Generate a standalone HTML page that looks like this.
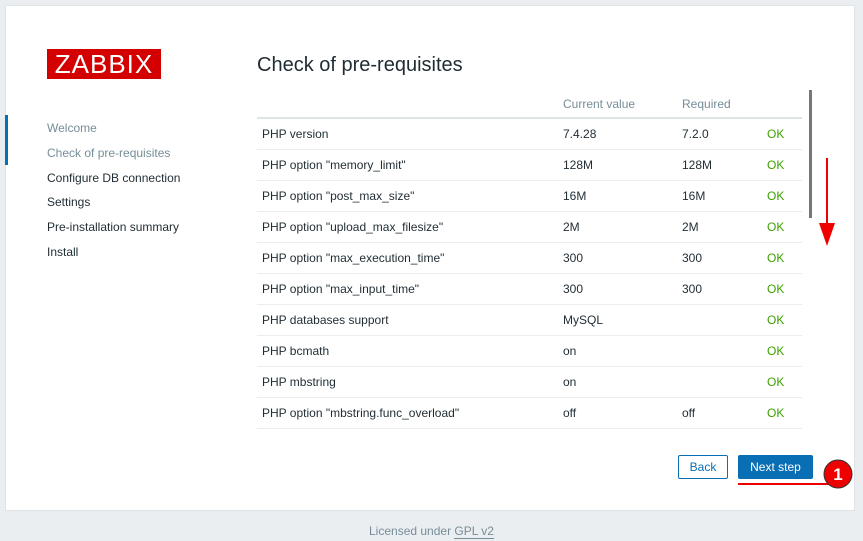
<!DOCTYPE html>
<html><head><meta charset="utf-8"><style>
body{margin:0;width:863px;height:541px;background:#ebeef1;font-family:"Liberation Sans",sans-serif;position:relative;overflow:hidden}
.card{position:absolute;left:5px;top:5px;width:850px;height:506px;background:#fff;border:1px solid #dfe4e7;box-sizing:border-box}
.logo{position:absolute;left:47px;top:49px;width:114px;height:30px;background:#d40000;color:#fff;font-size:26px;line-height:31px;text-align:center;letter-spacing:1px}
.nav{position:absolute;left:47px;font-size:12px;color:#1f2c33}
.bar{position:absolute;left:5px;top:115px;width:3px;height:50px;background:#0a6eb4}
h1{position:absolute;left:257px;top:54px;margin:0;font-weight:normal;font-size:20px;color:#1f2c33}
table{position:absolute;left:257px;top:90px;width:545px;border-collapse:collapse;font-size:12px;color:#1f2c33}
th{font-weight:normal;color:#768d99;text-align:left;height:27px;border-bottom:2px solid #dfe4e7;padding:0 5px}
td{height:30px;border-bottom:1px solid #ebeef1;padding:0 5px}
td.ok{color:#3ea000}
.btn{position:absolute;top:455px;height:24px;box-sizing:border-box;font-size:12px;line-height:24px;text-align:center;border-radius:2px}
</style></head><body>
<div class="card"></div>
<div class="bar"></div>
<div class="logo">ZABBIX</div>
<div class="nav" style="top:121px;color:#768d99">Welcome</div>
<div class="nav" style="top:146px;color:#768d99">Check of pre-requisites</div>
<div class="nav" style="top:171px">Configure DB connection</div>
<div class="nav" style="top:195px">Settings</div>
<div class="nav" style="top:220px">Pre-installation summary</div>
<div class="nav" style="top:245px">Install</div>
<h1>Check of pre-requisites</h1>
<table>
<tr><th style="width:291px"></th><th style="width:109px">Current value</th><th style="width:75px">Required</th><th></th></tr>
<tr><td>PHP version</td><td>7.4.28</td><td>7.2.0</td><td class="ok">OK</td></tr>
<tr><td>PHP option "memory_limit"</td><td>128M</td><td>128M</td><td class="ok">OK</td></tr>
<tr><td>PHP option "post_max_size"</td><td>16M</td><td>16M</td><td class="ok">OK</td></tr>
<tr><td>PHP option "upload_max_filesize"</td><td>2M</td><td>2M</td><td class="ok">OK</td></tr>
<tr><td>PHP option "max_execution_time"</td><td>300</td><td>300</td><td class="ok">OK</td></tr>
<tr><td>PHP option "max_input_time"</td><td>300</td><td>300</td><td class="ok">OK</td></tr>
<tr><td>PHP databases support</td><td>MySQL</td><td></td><td class="ok">OK</td></tr>
<tr><td>PHP bcmath</td><td>on</td><td></td><td class="ok">OK</td></tr>
<tr><td>PHP mbstring</td><td>on</td><td></td><td class="ok">OK</td></tr>
<tr><td>PHP option "mbstring.func_overload"</td><td>off</td><td>off</td><td class="ok">OK</td></tr>
</table>
<div style="position:absolute;left:809px;top:90px;width:3px;height:128px;background:#777"></div>
<svg style="position:absolute;left:0;top:0" width="863" height="541">
<line x1="827" y1="158" x2="827" y2="228" stroke="#e00" stroke-width="2"/>
<polygon points="819,223 835,223 827,246" fill="#e00"/>
<line x1="738" y1="484" x2="830" y2="484" stroke="#e00" stroke-width="2"/>
<circle cx="838" cy="474" r="14" fill="#e00" stroke="#333" stroke-width="1"/>
<text x="838" y="480" fill="#fff" font-size="17" font-weight="bold" text-anchor="middle" font-family="Liberation Sans">1</text>
</svg>
<div class="btn" style="left:678px;width:50px;border:1px solid #0a6eb4;color:#0a6eb4;background:#fff;line-height:22px">Back</div>
<div class="btn" style="left:738px;width:75px;background:#0a6eb4;color:#fff">Next step</div>
<div style="position:absolute;top:524px;left:0;width:863px;text-align:center;font-size:12px;color:#768d99">Licensed under <span style="border-bottom:1px solid #768d99">GPL v2</span></div>
</body></html>
